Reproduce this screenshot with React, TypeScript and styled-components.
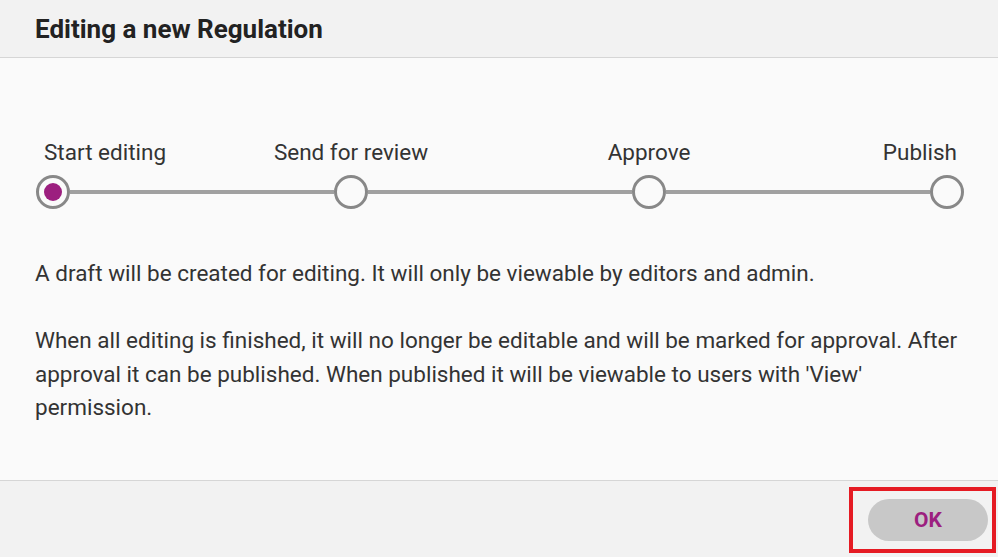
import React from 'react'
import styled, { createGlobalStyle } from 'styled-components'

const GlobalStyle = createGlobalStyle`
  html, body, #root {
    margin: 0;
    padding: 0;
    height: 100%;
  }
  body {
    font-family: Roboto, "Liberation Sans", Arial, sans-serif;
    background: #fafafa;
  }
`

const steps = ['Start editing', 'Send for review', 'Approve', 'Publish']

const App = () => {
  return (
    <Dialog>
      <GlobalStyle />
      <Header>
        <Title>Editing a new Regulation</Title>
      </Header>
      <Body>
        <Stepper>
          {steps.map((label, i) => (
            <React.Fragment key={label}>
              {i > 0 && <Connector />}
              <Step $align={i === 0 ? 'start' : i === steps.length - 1 ? 'end' : 'center'}>
                <StepLabel $align={i === 0 ? 'start' : i === steps.length - 1 ? 'end' : 'center'}>
                  {label}
                </StepLabel>
                <Circle>{i === 0 && <Dot />}</Circle>
              </Step>
            </React.Fragment>
          ))}
        </Stepper>
        <Text>A draft will be created for editing. It will only be viewable by editors and admin.</Text>
        <Text>
          When all editing is finished, it will no longer be editable and will be marked for approval. After
          approval it can be published. When published it will be viewable to users with 'View' permission.
        </Text>
      </Body>
      <Footer>
        <Highlight>
          <OkButton>OK</OkButton>
        </Highlight>
      </Footer>
    </Dialog>
  )
}

const Dialog = styled.div`
  display: flex;
  flex-direction: column;
  width: 998px;
  height: 557px;
  overflow: hidden;
`

const Header = styled.div`
  height: 57px;
  flex-shrink: 0;
  display: flex;
  align-items: center;
  padding: 0 35px;
  background: #f2f2f2;
  border-bottom: 1px solid #d6d6d6;
`

const Title = styled.h1`
  margin: 0;
  font-size: 26px;
  font-weight: 700;
  color: #222;
`

const Body = styled.div`
  flex: 1;
  padding: 82px 35px 0 35px;
  background: #fafafa;
`

const Stepper = styled.div`
  display: flex;
  align-items: flex-end;
  margin: 0 -1px 48px 1px;
`

type Align = 'start' | 'center' | 'end'

const Step = styled.div<{ $align: Align }>`
  width: 34px;
  flex-shrink: 0;
  display: flex;
  flex-direction: column;
  align-items: ${p => (p.$align === 'start' ? 'flex-start' : p.$align === 'end' ? 'flex-end' : 'center')};
  gap: 11px;
`

const StepLabel = styled.span<{ $align: Align }>`
  white-space: nowrap;
  font-size: 22.5px;
  line-height: 24px;
  color: #333;
  margin-left: ${p => (p.$align === 'start' ? '8px' : '0')};
  margin-right: ${p => (p.$align === 'end' ? '7px' : '0')};
`

const Circle = styled.div`
  box-sizing: border-box;
  width: 34px;
  height: 34px;
  border-radius: 50%;
  border: 3.5px solid #888;
  display: flex;
  align-items: center;
  justify-content: center;
  background: #fafafa;
`

const Dot = styled.div`
  width: 18px;
  height: 18px;
  border-radius: 50%;
  background: #9c1f7f;
`

const Connector = styled.div`
  flex: 1;
  height: 4px;
  margin-bottom: 15px;
  background: #a0a0a0;
`

const Text = styled.p`
  margin: 0 0 33.5px 0;
  font-size: 22.5px;
  line-height: 33.5px;
  color: #333;
`

const Footer = styled.div`
  height: 76px;
  flex-shrink: 0;
  display: flex;
  justify-content: flex-end;
  align-items: center;
  padding-right: 2px;
  background: #f2f2f2;
  border-top: 1px solid #d6d6d6;
`

const Highlight = styled.div`
  box-sizing: border-box;
  width: 147px;
  height: 66px;
  margin-top: 2px;
  border: 4px solid #e51b23;
  display: flex;
  align-items: center;
  justify-content: flex-end;
  padding-right: 4px;
`

const OkButton = styled.button`
  width: 120px;
  height: 42px;
  border: none;
  border-radius: 21px;
  background: #c8c8c8;
  color: #9c1f7f;
  font-family: Roboto, "Liberation Sans", Arial, sans-serif;
  font-size: 21px;
  font-weight: 700;
  cursor: pointer;
`

export default App
